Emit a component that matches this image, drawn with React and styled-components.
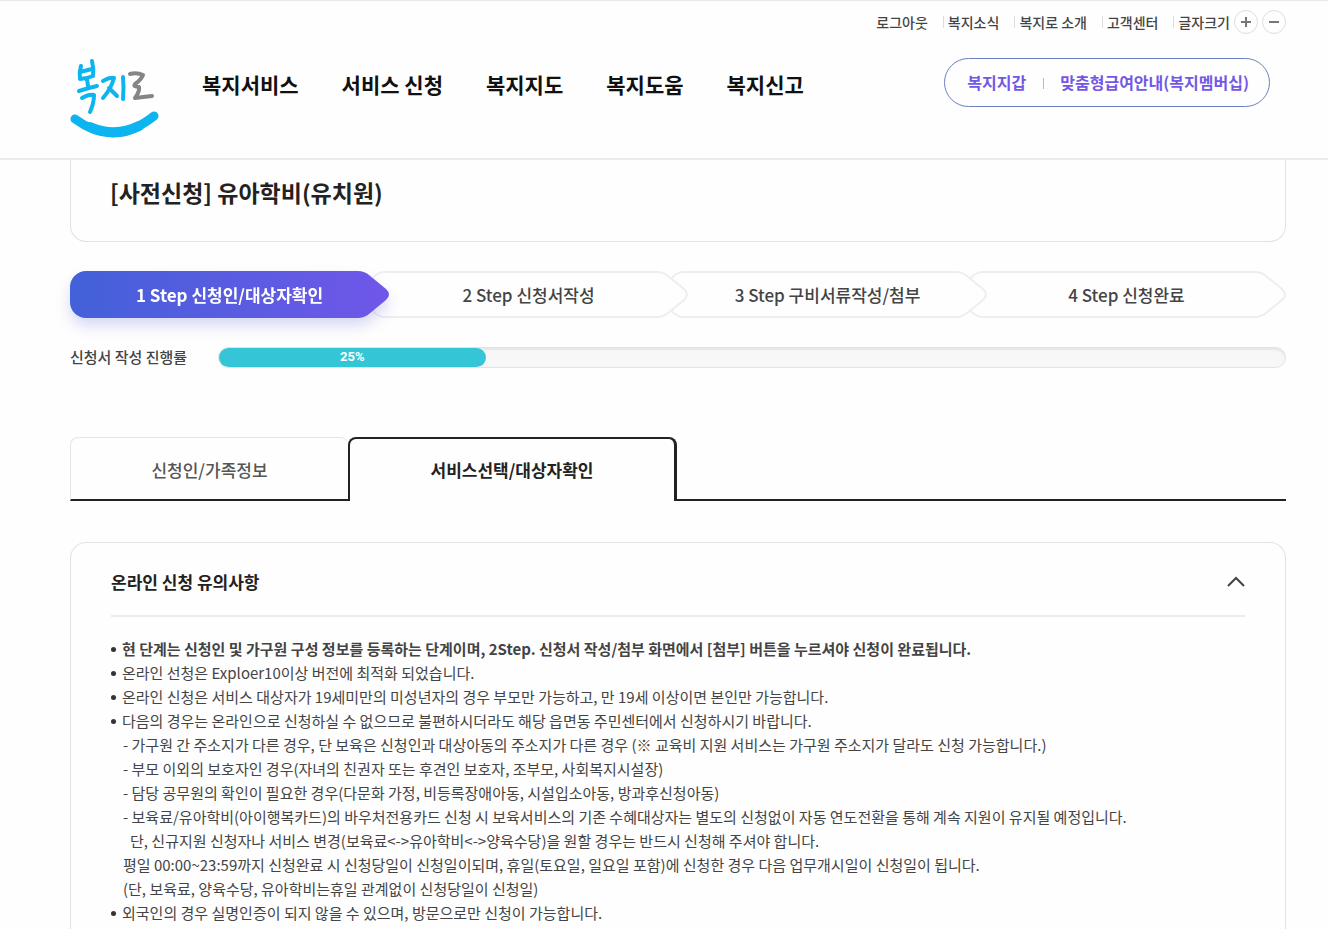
import React from 'react';
import styled, { createGlobalStyle, css } from 'styled-components';

const GlobalStyle = createGlobalStyle`
  * { box-sizing: border-box; }
  body {
    margin: 0;
    background: #fefefe;
    color: #444;
    font-family: "Noto Sans CJK KR", "Noto Sans", sans-serif;
    font-size: 15px;
    line-height: 24px;
  }
  a { color: inherit; text-decoration: none; }
  ul, ol { list-style: none; margin: 0; padding: 0; }
  h1, h2, p { margin: 0; }
  button { font: inherit; color: inherit; background: none; border: 0; padding: 0; cursor: pointer; }
`;

const Page = styled.div`
  min-height: 100vh;
  display: flex;
  flex-direction: column;
`;

const Header = styled.header`
  height: 160px;
  padding: 0 42px 0 70px;
  border-top: 1px solid #e9e9e9;
  border-bottom: 2px solid #ebebeb;
  display: flex;
  justify-content: space-between;
`;

const Brand = styled.div`
  display: flex;
  align-items: flex-start;
  gap: 42px;
`;

const LogoLink = styled.a`
  display: block;
  margin-top: 56px;
  svg { display: block; }
`;

const MainNav = styled.nav`
  display: flex;
  gap: 43px;
  margin-top: 67px;
  font-size: 21px;
  line-height: 32px;
  font-weight: 700;
  color: #111;
  white-space: nowrap;
`;

const HeaderSide = styled.div`
  display: flex;
  flex-direction: column;
  align-items: flex-end;
  white-space: nowrap;
`;

const Utility = styled.div`
  display: flex;
  align-items: center;
  height: 24px;
  margin-top: 9px;
  font-size: 14px;
  font-weight: 500;
  color: #444;
`;

const UtilityItem = styled.span`
  display: flex;
  align-items: center;
  & + &::before {
    content: "";
    width: 1px;
    height: 12px;
    margin: 0 4px 0 15px;
    background: #ddd;
  }
`;

const SizeButton = styled.button`
  width: 24px;
  height: 24px;
  margin-left: 4px;
  border: 1px solid #dedede;
  border-radius: 50%;
  display: grid;
  place-items: center;
`;

const Pill = styled.div`
  display: flex;
  align-items: center;
  height: 49px;
  margin: 24px 16px 0 0;
  padding: 0 20px 2px 22px;
  border: 1px solid #6c80bd;
  border-radius: 25px;
  font-size: 16px;
  font-weight: 700;
  color: #7358e6;
  a + a::before {
    content: "";
    display: inline-block;
    width: 1px;
    height: 11px;
    margin: 0 16px 0 17px;
    background: #bbb;
  }
`;

const Main = styled.main`
  flex: 1;
  display: flex;
  flex-direction: column;
  padding: 0 42px 0 70px;
`;

const TitleCard = styled.section`
  height: 82px;
  padding: 15px 39px 0;
  border: 1px solid #e2e2e2;
  border-top: 0;
  border-radius: 0 0 16px 16px;
`;

const PageTitle = styled.h1`
  font-size: 23px;
  line-height: 34px;
  font-weight: 700;
  color: #222;
`;

const Steps = styled.ol`
  display: flex;
  margin-top: 29px;
`;

const activeStep = css`
  color: #fff;
  font-weight: 700;
  filter: drop-shadow(0 8px 7px rgba(84, 88, 210, 0.22));
  &::before {
    border: 0;
    background: linear-gradient(90deg, #4361d9, #6b58e7);
  }
`;

const Step = styled.li`
  position: relative;
  z-index: ${(p) => p.$order};
  flex: 1;
  height: 47px;
  display: flex;
  align-items: center;
  justify-content: center;
  font-size: 17px;
  font-weight: 500;
  & + & { margin-left: -20px; }
  &::before {
    content: "";
    position: absolute;
    inset: 0 31px 0 0;
    background: #fefefe;
    border: 2px solid #eee;
    border-right: 0;
    border-radius: 16px 0 0 16px;
  }
  ${(p) => p.$active && activeStep}
`;

const StepHead = styled.svg`
  position: absolute;
  right: 0;
  top: 0;
`;

const StepText = styled.span`
  position: relative;
`;

const Progress = styled.div`
  display: flex;
  align-items: center;
  gap: 31px;
  margin-top: 27px;
  font-weight: 500;
`;

const Track = styled.div`
  flex: 1;
  height: 21px;
  border: 1px solid #e3e3e3;
  border-radius: 11px;
  background: #f7f7f7;
  box-shadow: inset 0 2px 2px #e6e6e6;
`;

const Fill = styled.div`
  height: 19px;
  border-radius: 10px;
  background: #34c6d7;
  color: #fff;
  font: 700 13px/18px Roboto, sans-serif;
  text-align: center;
`;

const Tabs = styled.div`
  display: flex;
  margin-top: 68px;
  &::after {
    content: "";
    flex: 1;
    border-bottom: 2px solid #222;
  }
`;

const Tab = styled.button`
  width: ${(p) => (p.$active ? 329 : 278)}px;
  height: 64px;
  padding-top: ${(p) => (p.$active ? 0 : 2)}px;
  font-size: 17px;
  font-weight: ${(p) => (p.$active ? 700 : 500)};
  color: ${(p) => (p.$active ? '#222' : '#555')};
  border: ${(p) => (p.$active ? '2px solid #222' : '1px solid #e5e5e5')};
  border-bottom: ${(p) => (p.$active ? '0' : '2px solid #222')};
  border-right-width: ${(p) => (p.$active ? 3 : 0)}px;
  border-radius: 8px 8px 0 0;
`;

const Notice = styled.section`
  flex: 1;
  margin-top: 41px;
  padding: 0 40px;
  border: 1px solid #e2e2e2;
  border-bottom: 0;
  border-radius: 16px 16px 0 0;
`;

const NoticeHead = styled.div`
  display: flex;
  align-items: center;
  justify-content: space-between;
  height: 74px;
  padding-top: 5px;
  border-bottom: 2px solid #ebebeb;
`;

const NoticeTitle = styled.h2`
  font-size: 17px;
  line-height: 24px;
  font-weight: 700;
  color: #222;
`;

const NoticeList = styled.ul`
  padding-top: 20px;
`;

const NoticeItem = styled.li`
  position: relative;
  padding-left: 11px;
  font-weight: ${(p) => (p.$strong ? 700 : 400)};
  &::before {
    content: "";
    position: absolute;
    left: 0;
    top: 10px;
    width: 5px;
    height: 5px;
    border-radius: 50%;
    background: #333;
  }
`;

const SubLine = styled.p`
  padding-left: ${(p) => (p.$deep ? 8 : 1)}px;
`;

const Chevron = styled.svg`
  display: block;
`;

const Logo = () => (
  <svg width="90" height="84" viewBox="0 0 90 84" fill="none" strokeLinecap="round" strokeLinejoin="round" role="img" aria-label="복지로">
    <g stroke="#0cb5f0" strokeWidth="4">
      <path d="M11 9Q9 15 10 22Q16 22 23 19M22 4Q24 12 23 19M10 15L22 12M17 22L18 29M9 34Q18 31 27 29" />
      <path d="M12 41Q19 37 24 38Q24 46 20 55" />
      <path d="M33 24Q40 20 44 21Q41 32 33 41M39 31Q43 35 47 39M53 20Q54 30 53 42" />
    </g>
    <path d="M60 17Q67 15 73 18Q71 23 65 27Q63 30 69 30Q70 34 65 41Q73 40 82 39" stroke="#858585" strokeWidth="4" />
    <path d="M5 62Q44 91 84 59" stroke="#0cb5f0" strokeWidth="9" />
    <path d="M20 70Q45 81 69 69" stroke="#0cb5f0" strokeWidth="10" />
  </svg>
);

const steps = ['1 Step 신청인/대상자확인', '2 Step 신청서작성', '3 Step 구비서류작성/첨부', '4 Step 신청완료'];

export default function App() {
  return (
    <Page>
      <GlobalStyle />
      <Header>
        <Brand>
          <LogoLink href="#"><Logo /></LogoLink>
          <MainNav>
            <a href="#">복지서비스</a>
            <a href="#">서비스 신청</a>
            <a href="#">복지지도</a>
            <a href="#">복지도움</a>
            <a href="#">복지신고</a>
          </MainNav>
        </Brand>
        <HeaderSide>
          <Utility>
            <UtilityItem><a href="#">로그아웃</a></UtilityItem>
            <UtilityItem><a href="#">복지소식</a></UtilityItem>
            <UtilityItem><a href="#">복지로 소개</a></UtilityItem>
            <UtilityItem><a href="#">고객센터</a></UtilityItem>
            <UtilityItem>글자크기</UtilityItem>
            <SizeButton aria-label="글자 크게">
              <svg width="10" height="10" stroke="#777" strokeWidth="2"><path d="M0 5H10M5 0V10" /></svg>
            </SizeButton>
            <SizeButton aria-label="글자 작게">
              <svg width="10" height="10" stroke="#777" strokeWidth="2"><path d="M0 5H10" /></svg>
            </SizeButton>
          </Utility>
          <Pill>
            <a href="#">복지지갑</a>
            <a href="#">맞춤형급여안내(복지멤버십)</a>
          </Pill>
        </HeaderSide>
      </Header>
      <Main>
        <TitleCard>
          <PageTitle>[사전신청] 유아학비(유치원)</PageTitle>
        </TitleCard>
        <Steps>
          {steps.map((label, i) => (
            <Step key={label} $active={i === 0} $order={steps.length - i} aria-current={i === 0 ? 'step' : undefined}>
              <StepHead width="32" height="47" viewBox="0 0 32 47">
                {i === 0 ? (
                  <>
                    <defs>
                      <linearGradient id="head"><stop stopColor="#6b58e7" /><stop offset="1" stopColor="#7056ea" /></linearGradient>
                    </defs>
                    <path d="M0 0H1Q7 0 12 4L29 18Q35 23.500 29 29L12 43Q7 47 1 47H0Z" fill="url(#head)" />
                  </>
                ) : (
                  <path d="M0 1H1Q7 1 12 5L28 18Q34 23.500 28 29L12 42Q7 46 1 46H0" fill="#fefefe" stroke="#eee" strokeWidth="2" />
                )}
              </StepHead>
              <StepText>{label}</StepText>
            </Step>
          ))}
        </Steps>
        <Progress>
          <span id="progress-label">신청서 작성 진행률</span>
          <Track role="progressbar" aria-labelledby="progress-label" aria-valuenow={25} aria-valuemin={0} aria-valuemax={100}>
            <Fill style={{ width: '25%' }}>25%</Fill>
          </Track>
        </Progress>
        <Tabs role="tablist">
          <Tab role="tab" aria-selected="false">신청인/가족정보</Tab>
          <Tab role="tab" aria-selected="true" $active>서비스선택/대상자확인</Tab>
        </Tabs>
        <Notice>
          <NoticeHead>
            <NoticeTitle>온라인 신청 유의사항</NoticeTitle>
            <button aria-label="접기">
              <Chevron width="18" height="12" viewBox="0 0 18 12" fill="none" stroke="#444" strokeWidth="2"><path d="M1 10L9 2L17 10" /></Chevron>
            </button>
          </NoticeHead>
          <NoticeList>
            <NoticeItem $strong>현 단계는 신청인 및 가구원 구성 정보를 등록하는 단계이며, 2Step. 신청서 작성/첨부 화면에서 [첨부] 버튼을 누르셔야 신청이 완료됩니다.</NoticeItem>
            <NoticeItem>온라인 선청은 Exploer10이상 버전에 최적화 되었습니다.</NoticeItem>
            <NoticeItem>온라인 신청은 서비스 대상자가 19세미만의 미성년자의 경우 부모만 가능하고, 만 19세 이상이면 본인만 가능합니다.</NoticeItem>
            <NoticeItem>
              다음의 경우는 온라인으로 신청하실 수 없으므로 불편하시더라도 해당 읍면동 주민센터에서 신청하시기 바랍니다.
              <SubLine>- 가구원 간 주소지가 다른 경우, 단 보육은 신청인과 대상아동의 주소지가 다른 경우 (※ 교육비 지원 서비스는 가구원 주소지가 달라도 신청 가능합니다.)</SubLine>
              <SubLine>- 부모 이외의 보호자인 경우(자녀의 친권자 또는 후견인 보호자, 조부모, 사회복지시설장)</SubLine>
              <SubLine>- 담당 공무원의 확인이 필요한 경우(다문화 가정, 비등록장애아동, 시설입소아동, 방과후신청아동)</SubLine>
              <SubLine>- 보육료/유아학비(아이행복카드)의 바우처전용카드 신청 시 보육서비스의 기존 수혜대상자는 별도의 신청없이 자동 연도전환을 통해 계속 지원이 유지될 예정입니다.</SubLine>
              <SubLine $deep>단, 신규지원 신청자나 서비스 변경(보육료&lt;-&gt;유아학비&lt;-&gt;양육수당)을 원할 경우는 반드시 신청해 주셔야 합니다.</SubLine>
              <SubLine>평일 00:00~23:59까지 신청완료 시 신청당일이 신청일이되며, 휴일(토요일, 일요일 포함)에 신청한 경우 다음 업무개시일이 신청일이 됩니다.</SubLine>
              <SubLine>(단, 보육료, 양육수당, 유아학비는휴일 관계없이 신청당일이 신청일)</SubLine>
            </NoticeItem>
            <NoticeItem>외국인의 경우 실명인증이 되지 않을 수 있으며, 방문으로만 신청이 가능합니다.</NoticeItem>
          </NoticeList>
        </Notice>
      </Main>
    </Page>
  );
}
